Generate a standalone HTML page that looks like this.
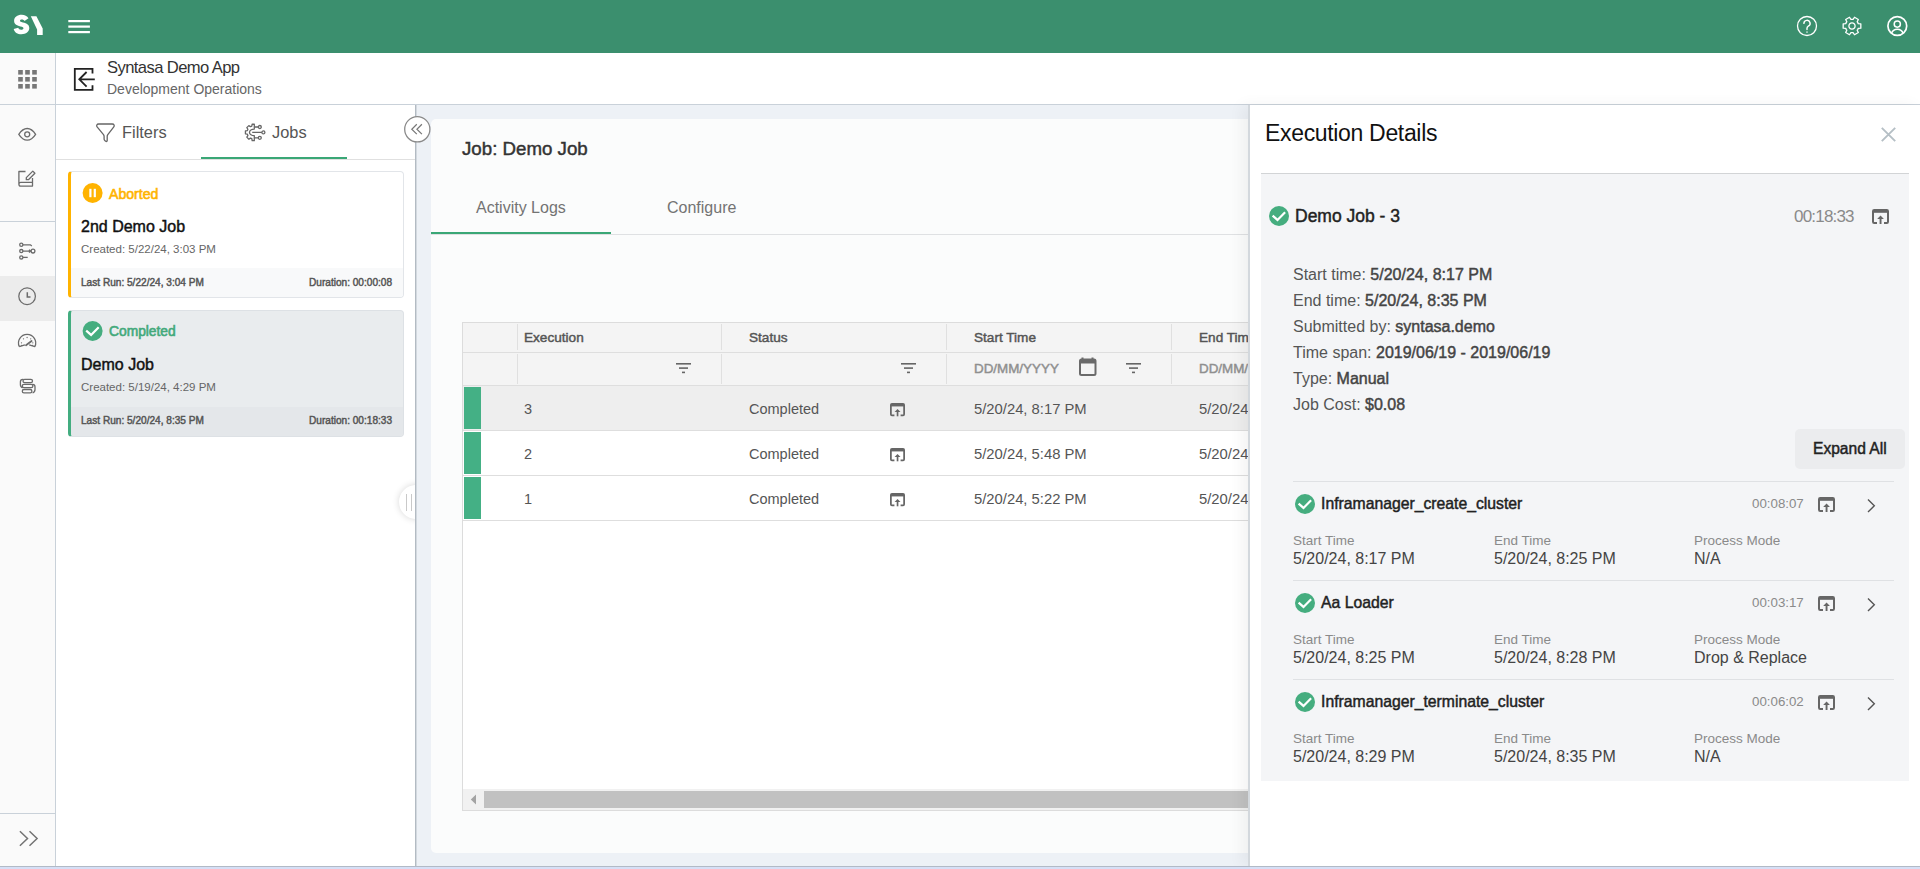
<!DOCTYPE html>
<html><head><meta charset="utf-8">
<style>
*{box-sizing:border-box;margin:0;padding:0}
html,body{width:1920px;height:869px;overflow:hidden;background:#fff;font-family:"Liberation Sans",sans-serif;color:#333}
.a{position:absolute}
.t{position:absolute;line-height:1;white-space:nowrap}
.m{-webkit-text-stroke:0.45px currentColor}
svg{position:absolute;overflow:visible}
</style></head><body>
<!-- header -->
<div class="a" style="left:0;top:0;width:1920px;height:53px;background:#3b8f6e"></div>
<!-- icon rail -->
<div class="a" style="left:0;top:53px;width:56px;height:813px;background:#fafafa;border-right:1px solid #c9d1d9"></div>
<div class="a" style="left:0;top:104px;width:55px;height:1px;background:#c9d1d9"></div>
<div class="a" style="left:0;top:221px;width:55px;height:1px;background:#c9d1d9"></div>
<div class="a" style="left:0;top:276px;width:55px;height:45px;background:#ececec"></div>
<div class="a" style="left:0;top:813px;width:55px;height:1px;background:#c9d1d9"></div>
<!-- app bar -->
<div class="a" style="left:56px;top:53px;width:1864px;height:51px;background:#fff"></div>
<div class="a" style="left:56px;top:104px;width:1864px;height:1px;background:#c9d1d9"></div>
<!-- left panel -->
<div class="a" style="left:56px;top:105px;width:359px;height:761px;background:#fff"></div>
<div class="a" style="left:56px;top:159px;width:359px;height:1px;background:#e0e0e0"></div>
<div class="a" style="left:201px;top:157px;width:146px;height:2px;background:#3aa776"></div>
<div class="a" style="left:415px;top:105px;width:1px;height:761px;background:#b3bbc3"></div><div class="a" style="left:416px;top:105px;width:1px;height:761px;background:#d3d9df"></div>
<!-- main area -->
<div class="a" style="left:417px;top:105px;width:832px;height:761px;background:#edf1f6"></div>
<div class="a" style="left:431px;top:119px;width:830px;height:734px;background:#fbfcfc;border-radius:5px"></div>

<!-- main card -->
<div class="t m" id="t_job" style="left:462px;top:139.6px;font-size:18.7px;color:#333">Job: Demo Job</div>
<div class="t" id="t_act" style="left:476px;top:200.2px;font-size:16px;color:#737373">Activity Logs</div>
<div class="t" id="t_cfg" style="left:667px;top:200.2px;font-size:16px;color:#737373">Configure</div>
<div class="a" style="left:431px;top:234px;width:818px;height:1px;background:#dfe1e3"></div>
<div class="a" style="left:431px;top:232px;width:180px;height:2px;background:#3aa776"></div>
<!-- table -->
<div class="a" style="left:462px;top:322px;width:800px;height:489px;background:#fff;border:1px solid #dcdcdc"></div>
<div class="a" style="left:463px;top:323px;width:786px;height:62px;background:#f4f4f4"></div>
<div class="a" style="left:463px;top:352px;width:786px;height:1px;background:#dedede"></div>
<div class="a" style="left:463px;top:385px;width:786px;height:1px;background:#dedede"></div>
<div class="a" style="left:517px;top:324px;width:1px;height:26px;background:#e0e0e0"></div>
<div class="a" style="left:517px;top:354px;width:1px;height:30px;background:#e0e0e0"></div>
<div class="a" style="left:721px;top:324px;width:1px;height:26px;background:#e0e0e0"></div>
<div class="a" style="left:721px;top:354px;width:1px;height:30px;background:#e0e0e0"></div>
<div class="a" style="left:946px;top:324px;width:1px;height:26px;background:#e0e0e0"></div>
<div class="a" style="left:946px;top:354px;width:1px;height:30px;background:#e0e0e0"></div>
<div class="a" style="left:1171px;top:324px;width:1px;height:26px;background:#e0e0e0"></div>
<div class="a" style="left:1171px;top:354px;width:1px;height:30px;background:#e0e0e0"></div>
<div class="t m" id="t_h1" style="left:524px;top:331px;font-size:13.6px;color:#555">Execution</div>
<div class="t m" id="t_h2" style="left:749px;top:331px;font-size:13.6px;color:#555">Status</div>
<div class="t m" id="t_h3" style="left:974px;top:331px;font-size:13.6px;color:#555">Start Time</div>
<div class="t m" style="left:1199px;top:331px;font-size:13.6px;color:#555">End Time</div>
<div class="t m" id="t_dd" style="left:974px;top:361.6px;font-size:13.4px;color:#8f8f8f">DD/MM/YYYY</div>
<div class="t m" style="left:1199px;top:361.6px;font-size:13.4px;color:#8f8f8f">DD/MM/YYYY</div>
<svg style="left:676px;top:363px" width="16" height="12"><rect x="0" y="0" width="15" height="1.6" fill="#666"/><rect x="3" y="4.3" width="9" height="1.6" fill="#666"/><rect x="6" y="8.6" width="3" height="1.6" fill="#666"/></svg><svg style="left:901px;top:363px" width="16" height="12"><rect x="0" y="0" width="15" height="1.6" fill="#666"/><rect x="3" y="4.3" width="9" height="1.6" fill="#666"/><rect x="6" y="8.6" width="3" height="1.6" fill="#666"/></svg><svg style="left:1126px;top:363px" width="16" height="12"><rect x="0" y="0" width="15" height="1.6" fill="#666"/><rect x="3" y="4.3" width="9" height="1.6" fill="#666"/><rect x="6" y="8.6" width="3" height="1.6" fill="#666"/></svg>
<svg style="left:1079px;top:357.3px" width="18" height="19"><path d="M3.5 0.5v3M13.5 0.5v3" stroke="#6a6a6a" stroke-width="2"/><rect x="1" y="2.5" width="15.5" height="15.5" rx="1.5" fill="none" stroke="#6a6a6a" stroke-width="2"/><rect x="1" y="2.5" width="15.5" height="4" fill="#6a6a6a"/></svg>
<div class="a" style="left:463px;top:386px;width:786px;height:44px;background:#eeeeee"></div><div class="a" style="left:463px;top:430px;width:786px;height:1px;background:#dedede"></div><div class="a" style="left:464px;top:387px;width:17px;height:42px;background:#44b085"></div><div class="t" style="left:524px;top:402px;font-size:14.5px;color:#555">3</div><div class="t" style="left:749px;top:402px;font-size:14.5px;color:#555">Completed</div><svg style="left:890px;top:403px" width="15" height="13.4" viewBox="0 0 17 15" fill="none" stroke="#666" stroke-width="2"><path d="M5 14H2.2a1.2 1.2 0 0 1-1.2-1.2V2.2A1.2 1.2 0 0 1 2.2 1h12.6a1.2 1.2 0 0 1 1.2 1.2v10.6a1.2 1.2 0 0 1-1.2 1.2H12"/><rect x="1" y="1" width="15" height="2.8" fill="#666" stroke="none"/><rect x="7.6" y="8.5" width="1.9" height="6.5" fill="#666" stroke="none"/><path d="M5.2 10L8.55 6.6 11.9 10z" fill="#666" stroke="none"/></svg><div class="t" style="left:974px;top:402px;font-size:14.8px;color:#555">5/20/24, 8:17 PM</div><div class="t" style="left:1199px;top:402px;font-size:14.8px;color:#555">5/20/24, 8:35 PM</div><div class="a" style="left:463px;top:431px;width:786px;height:44px;background:#fff"></div><div class="a" style="left:463px;top:475px;width:786px;height:1px;background:#dedede"></div><div class="a" style="left:464px;top:432px;width:17px;height:42px;background:#44b085"></div><div class="t" style="left:524px;top:447px;font-size:14.5px;color:#555">2</div><div class="t" style="left:749px;top:447px;font-size:14.5px;color:#555">Completed</div><svg style="left:890px;top:448px" width="15" height="13.4" viewBox="0 0 17 15" fill="none" stroke="#666" stroke-width="2"><path d="M5 14H2.2a1.2 1.2 0 0 1-1.2-1.2V2.2A1.2 1.2 0 0 1 2.2 1h12.6a1.2 1.2 0 0 1 1.2 1.2v10.6a1.2 1.2 0 0 1-1.2 1.2H12"/><rect x="1" y="1" width="15" height="2.8" fill="#666" stroke="none"/><rect x="7.6" y="8.5" width="1.9" height="6.5" fill="#666" stroke="none"/><path d="M5.2 10L8.55 6.6 11.9 10z" fill="#666" stroke="none"/></svg><div class="t" style="left:974px;top:447px;font-size:14.8px;color:#555">5/20/24, 5:48 PM</div><div class="t" style="left:1199px;top:447px;font-size:14.8px;color:#555">5/20/24, 8:35 PM</div><div class="a" style="left:463px;top:476px;width:786px;height:44px;background:#fff"></div><div class="a" style="left:463px;top:520px;width:786px;height:1px;background:#dedede"></div><div class="a" style="left:464px;top:477px;width:17px;height:42px;background:#44b085"></div><div class="t" style="left:524px;top:492px;font-size:14.5px;color:#555">1</div><div class="t" style="left:749px;top:492px;font-size:14.5px;color:#555">Completed</div><svg style="left:890px;top:493px" width="15" height="13.4" viewBox="0 0 17 15" fill="none" stroke="#666" stroke-width="2"><path d="M5 14H2.2a1.2 1.2 0 0 1-1.2-1.2V2.2A1.2 1.2 0 0 1 2.2 1h12.6a1.2 1.2 0 0 1 1.2 1.2v10.6a1.2 1.2 0 0 1-1.2 1.2H12"/><rect x="1" y="1" width="15" height="2.8" fill="#666" stroke="none"/><rect x="7.6" y="8.5" width="1.9" height="6.5" fill="#666" stroke="none"/><path d="M5.2 10L8.55 6.6 11.9 10z" fill="#666" stroke="none"/></svg><div class="t" style="left:974px;top:492px;font-size:14.8px;color:#555">5/20/24, 5:22 PM</div><div class="t" style="left:1199px;top:492px;font-size:14.8px;color:#555">5/20/24, 8:35 PM</div>
<!-- scrollbar -->
<div class="a" style="left:463px;top:789px;width:786px;height:21px;background:#f1f1f1"></div>
<svg style="left:470px;top:794px" width="8" height="11"><path d="M6 0.5v10L0.8 5.5z" fill="#a3a3a3"/></svg>
<div class="a" style="left:484px;top:791px;width:765px;height:17px;background:#c1c1c1"></div>
<!-- right panel -->
<div class="a" style="left:1248px;top:105px;width:672px;height:761px;background:#fff;border-left:2px solid #d3d8dd;box-shadow:-6px 0 14px rgba(0,0,0,0.05)"></div>

<!-- right panel content -->
<div class="t" id="t_exd" style="left:1265px;top:122px;font-size:23px;letter-spacing:-0.33px;color:#111">Execution Details</div>
<svg style="left:1880px;top:126px" width="17" height="17"><path d="M1.8 1.8l13.4 13.4M15.2 1.8L1.8 15.2" stroke="#b5bfc5" stroke-width="1.9"/></svg>
<div class="a" style="left:1261px;top:173px;width:648px;height:608px;background:#f4f5f7;border-top:1px solid #d2d4d6"></div>
<svg style="left:1269px;top:206px" width="22" height="22"><circle cx="10" cy="10" r="10" fill="#45ad7f"/><path d="M3.6 9.6l4.9 4.3 7.6-7.7" fill="none" stroke="#fff" stroke-width="2.2"/></svg>
<div class="t m" id="t_dj3" style="left:1295px;top:208px;font-size:17.5px;color:#222">Demo Job - 3</div>
<div class="t" id="t_dur" style="left:1794px;top:207.5px;font-size:17px;letter-spacing:-0.8px;color:#8a8a8a">00:18:33</div>
<svg style="left:1872px;top:209px" width="17" height="15" viewBox="0 0 17 15" fill="none" stroke="#666" stroke-width="2"><path d="M5 14H2.2a1.2 1.2 0 0 1-1.2-1.2V2.2A1.2 1.2 0 0 1 2.2 1h12.6a1.2 1.2 0 0 1 1.2 1.2v10.6a1.2 1.2 0 0 1-1.2 1.2H12"/><rect x="1" y="1" width="15" height="2.8" fill="#666" stroke="none"/><rect x="7.6" y="8.5" width="1.9" height="6.5" fill="#666" stroke="none"/><path d="M5.2 10L8.55 6.6 11.9 10z" fill="#666" stroke="none"/></svg>
<div class="t" style="left:1293px;top:267px;font-size:16px;color:#555">Start time: <span class="m" style="color:#444">5/20/24, 8:17 PM</span></div><div class="t" style="left:1293px;top:293px;font-size:16px;color:#555">End time: <span class="m" style="color:#444">5/20/24, 8:35 PM</span></div><div class="t" style="left:1293px;top:319px;font-size:16px;color:#555">Submitted by: <span class="m" style="color:#444">syntasa.demo</span></div><div class="t" style="left:1293px;top:345px;font-size:16px;color:#555">Time span: <span class="m" style="color:#444">2019/06/19 - 2019/06/19</span></div><div class="t" style="left:1293px;top:371px;font-size:16px;color:#555">Type: <span class="m" style="color:#444">Manual</span></div><div class="t" style="left:1293px;top:397px;font-size:16px;color:#555">Job Cost: <span class="m" style="color:#444">$0.08</span></div>
<div class="a" style="left:1795px;top:429px;width:110px;height:40px;background:#ebecee;border-radius:5px"></div>
<div class="t m" id="t_exp" style="left:1813px;top:440.5px;font-size:15.6px;color:#222">Expand All</div>
<div class="a" style="left:1293px;top:481px;width:601px;height:1px;background:#dfe1e4"></div><svg style="left:1295px;top:494px" width="22" height="22"><circle cx="10" cy="10" r="10" fill="#45ad7f"/><path d="M3.6 9.6l4.9 4.3 7.6-7.7" fill="none" stroke="#fff" stroke-width="2.2"/></svg><div class="t m" style="left:1321px;top:496px;font-size:15.75px;color:#222">Inframanager_create_cluster</div><div class="t" style="left:1752px;top:497px;font-size:13.3px;color:#8a8a8a">00:08:07</div><svg style="left:1818px;top:497px" width="17" height="15" viewBox="0 0 17 15" fill="none" stroke="#666" stroke-width="2"><path d="M5 14H2.2a1.2 1.2 0 0 1-1.2-1.2V2.2A1.2 1.2 0 0 1 2.2 1h12.6a1.2 1.2 0 0 1 1.2 1.2v10.6a1.2 1.2 0 0 1-1.2 1.2H12"/><rect x="1" y="1" width="15" height="2.8" fill="#666" stroke="none"/><rect x="7.6" y="8.5" width="1.9" height="6.5" fill="#666" stroke="none"/><path d="M5.2 10L8.55 6.6 11.9 10z" fill="#666" stroke="none"/></svg><svg style="left:1866px;top:498px" width="12" height="16"><path d="M2 1.5l6.3 6.3L2 14.1" fill="none" stroke="#555" stroke-width="1.4"/></svg><div class="t" style="left:1293px;top:534px;font-size:13.5px;color:#8a8a8a">Start Time</div><div class="t" style="left:1293px;top:551px;font-size:16px;color:#444">5/20/24, 8:17 PM</div><div class="t" style="left:1494px;top:534px;font-size:13.5px;color:#8a8a8a">End Time</div><div class="t" style="left:1494px;top:551px;font-size:16px;color:#444">5/20/24, 8:25 PM</div><div class="t" style="left:1694px;top:534px;font-size:13.5px;color:#8a8a8a">Process Mode</div><div class="t" style="left:1694px;top:551px;font-size:16px;color:#444">N/A</div><div class="a" style="left:1293px;top:580px;width:601px;height:1px;background:#dfe1e4"></div><svg style="left:1295px;top:593px" width="22" height="22"><circle cx="10" cy="10" r="10" fill="#45ad7f"/><path d="M3.6 9.6l4.9 4.3 7.6-7.7" fill="none" stroke="#fff" stroke-width="2.2"/></svg><div class="t m" style="left:1321px;top:595px;font-size:15.75px;color:#222">Aa Loader</div><div class="t" style="left:1752px;top:596px;font-size:13.3px;color:#8a8a8a">00:03:17</div><svg style="left:1818px;top:596px" width="17" height="15" viewBox="0 0 17 15" fill="none" stroke="#666" stroke-width="2"><path d="M5 14H2.2a1.2 1.2 0 0 1-1.2-1.2V2.2A1.2 1.2 0 0 1 2.2 1h12.6a1.2 1.2 0 0 1 1.2 1.2v10.6a1.2 1.2 0 0 1-1.2 1.2H12"/><rect x="1" y="1" width="15" height="2.8" fill="#666" stroke="none"/><rect x="7.6" y="8.5" width="1.9" height="6.5" fill="#666" stroke="none"/><path d="M5.2 10L8.55 6.6 11.9 10z" fill="#666" stroke="none"/></svg><svg style="left:1866px;top:597px" width="12" height="16"><path d="M2 1.5l6.3 6.3L2 14.1" fill="none" stroke="#555" stroke-width="1.4"/></svg><div class="t" style="left:1293px;top:633px;font-size:13.5px;color:#8a8a8a">Start Time</div><div class="t" style="left:1293px;top:650px;font-size:16px;color:#444">5/20/24, 8:25 PM</div><div class="t" style="left:1494px;top:633px;font-size:13.5px;color:#8a8a8a">End Time</div><div class="t" style="left:1494px;top:650px;font-size:16px;color:#444">5/20/24, 8:28 PM</div><div class="t" style="left:1694px;top:633px;font-size:13.5px;color:#8a8a8a">Process Mode</div><div class="t" style="left:1694px;top:650px;font-size:16px;color:#444">Drop &amp; Replace</div><div class="a" style="left:1293px;top:679px;width:601px;height:1px;background:#dfe1e4"></div><svg style="left:1295px;top:692px" width="22" height="22"><circle cx="10" cy="10" r="10" fill="#45ad7f"/><path d="M3.6 9.6l4.9 4.3 7.6-7.7" fill="none" stroke="#fff" stroke-width="2.2"/></svg><div class="t m" style="left:1321px;top:694px;font-size:15.75px;color:#222">Inframanager_terminate_cluster</div><div class="t" style="left:1752px;top:695px;font-size:13.3px;color:#8a8a8a">00:06:02</div><svg style="left:1818px;top:695px" width="17" height="15" viewBox="0 0 17 15" fill="none" stroke="#666" stroke-width="2"><path d="M5 14H2.2a1.2 1.2 0 0 1-1.2-1.2V2.2A1.2 1.2 0 0 1 2.2 1h12.6a1.2 1.2 0 0 1 1.2 1.2v10.6a1.2 1.2 0 0 1-1.2 1.2H12"/><rect x="1" y="1" width="15" height="2.8" fill="#666" stroke="none"/><rect x="7.6" y="8.5" width="1.9" height="6.5" fill="#666" stroke="none"/><path d="M5.2 10L8.55 6.6 11.9 10z" fill="#666" stroke="none"/></svg><svg style="left:1866px;top:696px" width="12" height="16"><path d="M2 1.5l6.3 6.3L2 14.1" fill="none" stroke="#555" stroke-width="1.4"/></svg><div class="t" style="left:1293px;top:732px;font-size:13.5px;color:#8a8a8a">Start Time</div><div class="t" style="left:1293px;top:749px;font-size:16px;color:#444">5/20/24, 8:29 PM</div><div class="t" style="left:1494px;top:732px;font-size:13.5px;color:#8a8a8a">End Time</div><div class="t" style="left:1494px;top:749px;font-size:16px;color:#444">5/20/24, 8:35 PM</div><div class="t" style="left:1694px;top:732px;font-size:13.5px;color:#8a8a8a">Process Mode</div><div class="t" style="left:1694px;top:749px;font-size:16px;color:#444">N/A</div>
<!-- bottom strip -->
<div class="a" style="left:0;top:866px;width:1920px;height:1px;background:#b2bac6"></div>
<div class="a" style="left:0;top:867px;width:1920px;height:2px;background:#d6dff6"></div>

<!-- header content -->
<svg style="left:0;top:0" width="100" height="53">
 <path d="M28.5 18.2c-1.3-2.2-3.8-3.4-6.8-3.4-4.4 0-7.6 2.4-7.6 6 0 3.4 2.4 4.8 6.3 5.6 2.3.5 3.1.9 3.1 1.8 0 .9-1 1.5-2.3 1.5-1.6 0-2.6-.7-3-1.9l-4.5 1.1c.8 3.3 3.7 5.3 7.7 5.3 4.6 0 7.9-2.3 7.9-6.1 0-3.4-2.3-4.9-6.4-5.7-2.3-.5-2.9-.9-2.9-1.7 0-.8.8-1.3 1.9-1.3 1.2 0 2.1.5 2.6 1.5z" fill="#fff"/>
 <path d="M30.8 16.2h5.6l6.3 12.2v6.5h-5.6v-5.3z" fill="#fff"/>
 <rect x="68.3" y="20" width="21.6" height="2.2" fill="#fff"/>
 <rect x="68.3" y="25.5" width="21.6" height="2.2" fill="#fff"/>
 <rect x="68.3" y="31" width="21.6" height="2.2" fill="#fff"/>
</svg>
<svg style="left:1787px;top:6px" width="130" height="40" fill="none" stroke="#fff" stroke-width="1.4">
 <circle cx="20" cy="20" r="9.5" stroke-width="1.3"/>
 <path d="M16.9 17.4a3.1 3.1 0 1 1 4.4 2.8c-.9.5-1.3 1.1-1.3 2.1v1.3" stroke-linecap="round"/>
 <rect x="19.4" y="25.4" width="1.2" height="1.4" fill="#fff" stroke="none"/>
 <g transform="translate(65 20)"><path d="M5.80 -3.35 L6.25 -2.40 L8.83 -2.20 L8.83 2.20 L6.25 2.40 L5.80 3.35 L5.21 4.22 L6.32 6.55 L2.51 8.75 L1.05 6.62 L-0.00 6.70 L-1.05 6.62 L-2.51 8.75 L-6.32 6.55 L-5.21 4.22 L-5.80 3.35 L-6.25 2.40 L-8.83 2.20 L-8.83 -2.20 L-6.25 -2.40 L-5.80 -3.35 L-5.21 -4.22 L-6.32 -6.55 L-2.51 -8.75 L-1.05 -6.62 L-0.00 -6.70 L1.05 -6.62 L2.51 -8.75 L6.32 -6.55 L5.21 -4.22Z" stroke-linejoin="round" stroke-width="1.3"/><circle cx="0" cy="0" r="3.1" stroke-width="1.3"/></g>
 <g transform="translate(110.3 20)"><circle cx="0" cy="0" r="9.4" stroke-width="1.7"/><circle cx="0" cy="-1.9" r="3.1" stroke-width="1.5"/><path d="M-5.8 7.4c.9-2.6 3.2-4.1 5.8-4.1s4.9 1.5 5.8 4.1" stroke-width="1.5"/></g>
</svg>
<!-- rail icons -->
<svg style="left:0;top:53px" width="56" height="813" fill="none" stroke="#6b6b6b" stroke-width="1.3">
 <g fill="#777" stroke="none">
  <rect x="18.2" y="17" width="4.6" height="4.6"/><rect x="25.2" y="17" width="4.6" height="4.6"/><rect x="32.2" y="17" width="4.6" height="4.6"/>
  <rect x="18.2" y="24" width="4.6" height="4.6"/><rect x="25.2" y="24" width="4.6" height="4.6"/><rect x="32.2" y="24" width="4.6" height="4.6"/>
  <rect x="18.2" y="31" width="4.6" height="4.6"/><rect x="25.2" y="31" width="4.6" height="4.6"/><rect x="32.2" y="31" width="4.6" height="4.6"/>
 </g>
 <path d="M18.8 81.3c2.5-3.9 5.3-5.8 8.4-5.8s5.9 1.9 8.4 5.8c-2.5 3.9-5.3 5.8-8.4 5.8s-5.9-1.9-8.4-5.8z"/>
 <circle cx="27.2" cy="81.3" r="2.5"/>
 <path d="M25.5 118.5h-6.6v12.7M18.9 131.2c0-1.2.7-1.9 1.9-1.9h11.7v3.8H20.8c-1.2 0-1.9-.7-1.9-1.9zM32.5 129.3v-4.2M26.3 124.6l6.5-6.5 2.1 2.1-6.5 6.5h-2.1z" stroke-linejoin="round"/>
 <g transform="translate(0 1.8)">
  <circle cx="21.3" cy="190" r="1.6"/><path d="M22.9 190h7.5l1.4 1.2"/>
  <circle cx="21.3" cy="196.3" r="1.6"/><path d="M22.9 196.3h7.8M29 194.9l1.7 1.4-1.7 1.4"/><circle cx="33" cy="196.3" r="1.9"/>
  <circle cx="21.3" cy="202.6" r="1.6"/><path d="M22.9 202.6h4.8"/>
 </g>
 <circle cx="27.1" cy="243.2" r="8.3" stroke-width="1.25"/>
 <path d="M27.3 239.3v4.7h3.2" stroke-width="1.5"/>
 <path d="M19.3 293.6A8.6 8.6 0 1 1 34.9 293.6L29.2 291.8M19.3 293.6L24.9 291.8" stroke-linejoin="round" stroke-width="1.3"/>
 <path d="M26 292.2l5.6-4.2" stroke-width="1.8" stroke-linecap="round"/>
 <g fill="#6b6b6b" stroke="none"><circle cx="21.5" cy="289.8" r=".65"/><circle cx="23.5" cy="285.8" r=".65"/><circle cx="27.1" cy="284.5" r=".65"/><circle cx="30.7" cy="285.8" r=".65"/><circle cx="32.8" cy="289.8" r=".65"/><circle cx="21.6" cy="292.3" r=".6"/><circle cx="32.6" cy="292.3" r=".6"/></g>
 <rect x="23" y="326.3" width="9.5" height="3.3" rx="1.65"/><rect x="22.3" y="331.4" width="10.6" height="3.3" rx="1.65"/><rect x="22.3" y="336.5" width="9.6" height="3.3" rx="1.65"/>
 <path d="M23.4 326.3h-.6c-1.6 0-2.4 1-2.4 2.4v2.8c0 1.6.9 2.9 2.4 3.2M32.3 331.4h.4c1.6 0 2.3 1 2.3 2.4v2.8c0 1.6-.9 2.9-2.4 3.2"/>
 <path d="M19.9 778.2l7.6 7.3-7.6 7.3M29.5 778.2l7.6 7.3-7.6 7.3" stroke="#737373" stroke-width="1.5"/>
</svg>
<!-- back icon + title -->
<svg style="left:56px;top:53px" width="60" height="51" fill="none" stroke="#222" stroke-width="1.8">
 <path d="M36.5 20.5V15.8H18.8V36.9H36.5V32.2"/>
 <path d="M38.8 26.3H23M30.6 19l-7.3 7.3 7.3 7.3"/>
</svg>
<div class="t" id="t_app" class="t m" style="left:107px;top:59.8px;font-size:16.6px;letter-spacing:-0.6px;color:#333">Syntasa Demo App</div>
<div class="t" id="t_dev" style="left:107px;top:82px;font-size:14px;color:#666">Development Operations</div>
<!-- left panel tabs -->
<svg style="left:56px;top:105px" width="359" height="54" fill="none" stroke="#666" stroke-width="1.3">
 <path d="M42.6 19H56.3C58 19 58.8 20.6 57.8 21.9L51.8 29.6C51.4 30.2 51.2 30.8 51.2 31.5V35.4C51.2 36.5 50.3 36.8 49.5 36.1L48.7 35.4C48.3 35 48.1 34.5 48.1 34V31.5C48.1 30.8 47.9 30.2 47.5 29.6L41.1 21.9C40.1 20.6 40.9 19 42.6 19Z" stroke-linejoin="round"/>
 <g transform="translate(189 18)" stroke-width="1.3">
  <path d="M9.30 1.10 L7.16 1.23 L6.81 3.15 L5.45 3.71 L3.84 2.60 L1.80 4.64 L2.91 6.25 L2.35 7.61 L0.43 7.96 L0.43 10.84 L2.35 11.19 L2.91 12.55 L1.80 14.16 L3.84 16.20 L5.45 15.09 L6.81 15.65 L7.16 17.57 L9.30 17.70 L9.3 12.7 A4.8 3.3 0 0 1 9.3 6.1000000000000005 Z" stroke-linejoin="round"/>
  <path d="M9.3 4H13.2M7.2 9.4H16.9M9.3 14.8H13.2"/>
  <circle cx="14.8" cy="4" r="1.5"/><circle cx="18.4" cy="9.4" r="1.5"/><circle cx="14.8" cy="14.8" r="1.5"/>
 </g>
</svg>
<div class="t" id="t_filters" style="left:122px;top:124px;font-size:16.4px;color:#555">Filters</div>
<div class="t" id="t_jobs" style="left:272px;top:124px;font-size:16.4px;color:#555">Jobs</div>

<!-- job cards -->
<div class="a" style="left:68px;top:171px;width:336px;height:127px;background:#fff;border:1px solid #e2e5e9;border-left:3px solid #ffb300;border-radius:4px;overflow:hidden">
 <div class="a" style="left:0;top:96px;width:340px;height:40px;background:#f8f9fa"></div>
</div>
<svg style="left:82px;top:183px" width="22" height="22"><circle cx="10.6" cy="10" r="10" fill="#ffb300"/><rect x="7.3" y="5.8" width="2.2" height="8.4" fill="#fff"/><rect x="11.7" y="5.8" width="2.2" height="8.4" fill="#fff"/></svg>
<div class="t m" id="t_ab" style="left:109px;top:186.8px;font-size:14.1px;color:#ffb300;-webkit-text-stroke:0.6px #ffb300">Aborted</div>
<div class="t m" id="t_j1" style="left:81px;top:218.5px;font-size:16px;color:#111">2nd Demo Job</div>
<div class="t" id="t_c1" style="left:81px;top:243.5px;font-size:11.5px;color:#666">Created: 5/22/24, 3:03 PM</div>
<div class="t m" id="t_l1" style="left:81px;top:278px;font-size:10.1px;color:#555">Last Run: 5/22/24, 3:04 PM</div>
<div class="t m" id="t_d1" style="left:309px;top:278px;font-size:10.1px;color:#555">Duration: 00:00:08</div>

<div class="a" style="left:68px;top:310px;width:336px;height:127px;background:#e9ecee;border:1px solid #dde1e5;border-left:3px solid #43ad80;border-radius:4px;overflow:hidden">
 <div class="a" style="left:0;top:96px;width:340px;height:40px;background:#e4e7ea"></div>
</div>
<svg style="left:82px;top:321px" width="22" height="22"><circle cx="10.6" cy="10" r="10" fill="#45ad7f"/><path d="M4.2 9.6l4.9 4.3 7.6-7.7" fill="none" stroke="#fff" stroke-width="2.2"/></svg>
<div class="t m" id="t_co" style="left:109px;top:325px;font-size:13.8px;color:#43a97b;-webkit-text-stroke:0.6px #43a97b">Completed</div>
<div class="t m" id="t_j2" style="left:81px;top:356.5px;font-size:16px;color:#111">Demo Job</div>
<div class="t" id="t_c2" style="left:81px;top:381.5px;font-size:11.5px;color:#666">Created: 5/19/24, 4:29 PM</div>
<div class="t m" id="t_l2" style="left:81px;top:416px;font-size:10.1px;color:#555">Last Run: 5/20/24, 8:35 PM</div>
<div class="t m" id="t_d2" style="left:309px;top:416px;font-size:10.1px;color:#555">Duration: 00:18:33</div>

<!-- collapse buttons -->
<svg style="left:400px;top:112px" width="36" height="36"><circle cx="17.3" cy="17.3" r="12.6" fill="#fff" stroke="#8a8a8a" stroke-width="1.3"/><path d="M16.8 12.3l-5 4.9 5 4.9M21.9 12.3l-5 4.9 5 4.9" fill="none" stroke="#777" stroke-width="1.2"/></svg>
<div class="a" style="left:375px;top:470px;width:40px;height:66px;overflow:hidden"><div class="a" style="left:23.5px;top:15.3px;width:34px;height:34px;border-radius:50%;background:#fff;box-shadow:0 0 7px rgba(0,0,0,0.16)"></div><div class="a" style="left:31px;top:24px;width:1px;height:17px;background:#c9c9c9"></div><div class="a" style="left:36px;top:24px;width:1px;height:17px;background:#c9c9c9"></div></div>
</body></html>
